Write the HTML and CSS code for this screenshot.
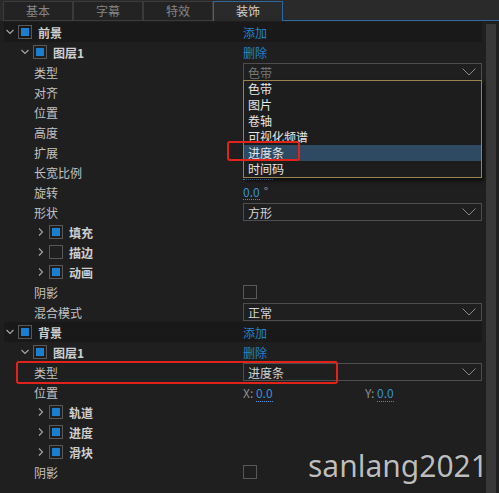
FILE: index.html
```html
<!DOCTYPE html>
<html>
<head>
<meta charset="utf-8">
<link rel="stylesheet" href="styles.css">
</head>
<body>
<div class="tabs">
  <div class="tab">基本</div>
  <div class="tab">字幕</div>
  <div class="tab">特效</div>
  <div class="tab active">装饰</div>
  <div class="tab-fill"></div>
</div>
<div class="panel">
  <div class="tree">
    <div class="row head">
      <div class="lbl l0"><svg class="chev" viewBox="0 0 8 8"><polyline points="0.5,2 4,5.5 7.5,2"/></svg><span class="cb on"></span><b>前景</b></div>
      <div class="val"><span class="link">添加</span></div>
    </div>
    <div class="row">
      <div class="lbl l1"><svg class="chev" viewBox="0 0 8 8"><polyline points="0.5,2 4,5.5 7.5,2"/></svg><span class="cb on"></span><b>图层1</b></div>
      <div class="val"><span class="link">删除</span></div>
    </div>
    <div class="row">
      <div class="lbl prop">类型</div>
      <div class="val">
        <div class="select dim"><span>色带</span><svg class="dd" viewBox="0 0 14 8"><polyline points="0.5,0.5 7,7 13.5,0.5"/></svg>
          <ul class="menu">
            <li>色带</li>
            <li>图片</li>
            <li>卷轴</li>
            <li>可视化频谱</li>
            <li class="hl">进度条</li>
            <li>时间码</li>
          </ul>
        </div>
      </div>
    </div>
    <div class="row"><div class="lbl prop">对齐</div><div class="val"></div></div>
    <div class="row"><div class="lbl prop">位置</div><div class="val"></div></div>
    <div class="row"><div class="lbl prop">高度</div><div class="val"></div></div>
    <div class="row"><div class="lbl prop">扩展</div><div class="val"></div></div>
    <div class="row"><div class="lbl prop">长宽比例</div><div class="val"><span class="num-hidden"></span></div></div>
    <div class="row"><div class="lbl prop">旋转</div><div class="val"><span class="num">0.0</span><span class="unit">°</span></div></div>
    <div class="row">
      <div class="lbl prop">形状</div>
      <div class="val"><div class="select"><span>方形</span><svg class="dd" viewBox="0 0 14 8"><polyline points="0.5,0.5 7,7 13.5,0.5"/></svg></div></div>
    </div>
    <div class="row"><div class="lbl l2"><svg class="chev" viewBox="0 0 8 8"><polyline points="2,0.5 5.5,4 2,7.5"/></svg><span class="cb on"></span><b>填充</b></div><div class="val"></div></div>
    <div class="row"><div class="lbl l2"><svg class="chev" viewBox="0 0 8 8"><polyline points="2,0.5 5.5,4 2,7.5"/></svg><span class="cb"></span><b>描边</b></div><div class="val"></div></div>
    <div class="row"><div class="lbl l2"><svg class="chev" viewBox="0 0 8 8"><polyline points="2,0.5 5.5,4 2,7.5"/></svg><span class="cb on"></span><b>动画</b></div><div class="val"></div></div>
    <div class="row"><div class="lbl prop">阴影</div><div class="val"><span class="cb"></span></div></div>
    <div class="row">
      <div class="lbl prop">混合模式</div>
      <div class="val"><div class="select"><span>正常</span><svg class="dd" viewBox="0 0 14 8"><polyline points="0.5,0.5 7,7 13.5,0.5"/></svg></div></div>
    </div>
    <div class="row head">
      <div class="lbl l0"><svg class="chev" viewBox="0 0 8 8"><polyline points="0.5,2 4,5.5 7.5,2"/></svg><span class="cb on"></span><b>背景</b></div>
      <div class="val"><span class="link">添加</span></div>
    </div>
    <div class="row">
      <div class="lbl l1"><svg class="chev" viewBox="0 0 8 8"><polyline points="0.5,2 4,5.5 7.5,2"/></svg><span class="cb on"></span><b>图层1</b></div>
      <div class="val"><span class="link">删除</span></div>
    </div>
    <div class="row">
      <div class="lbl prop">类型</div>
      <div class="val"><div class="select"><span>进度条</span><svg class="dd" viewBox="0 0 14 8"><polyline points="0.5,0.5 7,7 13.5,0.5"/></svg></div></div>
    </div>
    <div class="row">
      <div class="lbl prop">位置</div>
      <div class="val xy"><span><span class="axis">X:</span> <span class="num">0.0</span></span><span><span class="axis">Y:</span> <span class="num">0.0</span></span></div>
    </div>
    <div class="row"><div class="lbl l2"><svg class="chev" viewBox="0 0 8 8"><polyline points="2,0.5 5.5,4 2,7.5"/></svg><span class="cb on"></span><b>轨道</b></div><div class="val"></div></div>
    <div class="row"><div class="lbl l2"><svg class="chev" viewBox="0 0 8 8"><polyline points="2,0.5 5.5,4 2,7.5"/></svg><span class="cb on"></span><b>进度</b></div><div class="val"></div></div>
    <div class="row"><div class="lbl l2"><svg class="chev" viewBox="0 0 8 8"><polyline points="2,0.5 5.5,4 2,7.5"/></svg><span class="cb on"></span><b>滑块</b></div><div class="val"></div></div>
    <div class="row"><div class="lbl prop">阴影</div><div class="val"><span class="cb"></span></div></div>
  </div>
  <div class="scrollbar"></div>
</div>
<div class="mark m1"></div>
<div class="mark m2"></div>
<div class="watermark">sanlang2021</div>
</body>
</html>
```
FILE: styles.css
```css
html, body {
  margin: 0;
  padding: 0;
}
body {
  width: 499px;
  height: 493px;
  overflow: hidden;
  position: relative;
  background: #1f1f1f;
  font-family: "Noto Sans CJK SC", "Noto Sans", sans-serif;
  font-size: 12px;
  color: #c2c2c2;
}
.tabs {
  display: flex;
  height: 21px;
  box-sizing: border-box;
  padding: 1px 0 0 3px;
  background: #2a2a2a;
}
.tab {
  width: 70px;
  height: 20px;
  box-sizing: border-box;
  border: 1px solid #3b3b3b;
  background: #232323;
  color: #858585;
  text-align: center;
  line-height: 18px;
}
.tab.active {
  border-color: #2c6a9e;
  border-bottom: none;
  background: #2a2a2a;
  color: #d2d2d2;
}
.tab-fill {
  flex: 1;
  border-bottom: 1px solid #2c6a9e;
}
.panel {
  display: flex;
  padding-top: 1px;
}
.tree {
  width: 482px;
}
.scrollbar {
  width: 10px;
  height: 470px;
  margin: 2px 0 0 4px;
  background: #383838;
}
.row {
  display: grid;
  grid-template-columns: 243px 239px;
  height: 20px;
  align-items: center;
}
.row.head {
  background: #191919;
  margin-left: 4px;
  grid-template-columns: 239px 239px;
}
.lbl {
  display: flex;
  align-items: center;
  white-space: nowrap;
}
.lbl b {
  font-weight: 700;
  color: #cfcfcf;
}
.l0 { padding-left: 2px; }
.l1 { padding-left: 21px; }
.l2 { padding-left: 37px; }
.prop { padding-left: 34px; }
.chev {
  width: 8px;
  height: 8px;
  margin-right: 4px;
  fill: none;
  stroke: #a8a8a8;
  stroke-width: 1.1;
}
.cb {
  display: inline-block;
  width: 14px;
  height: 14px;
  box-sizing: border-box;
  border: 1px solid #585858;
  margin-right: 6px;
  flex: none;
}
.cb.on {
  padding: 2px;
  background: #1a7fcf;
  background-clip: content-box;
}
.val {
  display: flex;
  align-items: center;
  height: 20px;
  position: relative;
}
.link {
  color: #2283cf;
}
.num {
  color: #3a90d8;
  border-bottom: 1px dotted #3a90d8;
  line-height: 14px;
}
.num-hidden {
  display: inline-block;
  width: 30px;
  height: 14px;
  border-bottom: 1px dotted #3a90d8;
}
.unit {
  color: #9a9a9a;
  margin-left: 4px;
  position: relative;
  top: -2px;
}
.select {
  align-self: flex-start;
  margin-top: 1px;
  width: 239px;
  height: 18px;
  box-sizing: border-box;
  border: 1px solid #4e4e4e;
  padding: 0 5px 0 4px;
  display: flex;
  align-items: center;
  justify-content: space-between;
  color: #d4d4d4;
  position: relative;
}
.select.dim {
  color: #787878;
}
.dd {
  width: 14px;
  height: 8px;
  fill: none;
  stroke: #8a8a8a;
  stroke-width: 1;
}
.menu {
  position: absolute;
  left: -1px;
  top: 16px;
  width: 239px;
  box-sizing: border-box;
  margin: 0;
  padding: 0;
  list-style: none;
  border: 1px solid #9b8350;
  background: #1d1d1d;
  box-shadow: 2px 3px 4px rgba(0, 0, 0, 0.6);
  z-index: 5;
}
.menu li {
  height: 16px;
  line-height: 16px;
  padding-left: 4px;
  color: #e6e6e6;
}
.menu li.hl {
  background: #2d4a62;
}
.xy {
  display: grid;
  grid-template-columns: 122px 117px;
}
.axis {
  color: #8e8e8e;
}
.mark {
  position: absolute;
  box-sizing: border-box;
  border: 2px solid #e1231c;
  border-radius: 3px;
  z-index: 10;
}
.m1 {
  left: 227px;
  top: 141px;
  width: 73px;
  height: 20px;
}
.m2 {
  left: 16px;
  top: 361px;
  width: 322px;
  height: 23px;
}
.watermark {
  position: absolute;
  left: 308px;
  top: 451px;
  font-family: "Noto Sans", sans-serif;
  font-size: 30px;
  line-height: 30px;
  color: #bdbdbd;
  text-shadow: 0 0 1px #000;
  z-index: 11;
}
```
